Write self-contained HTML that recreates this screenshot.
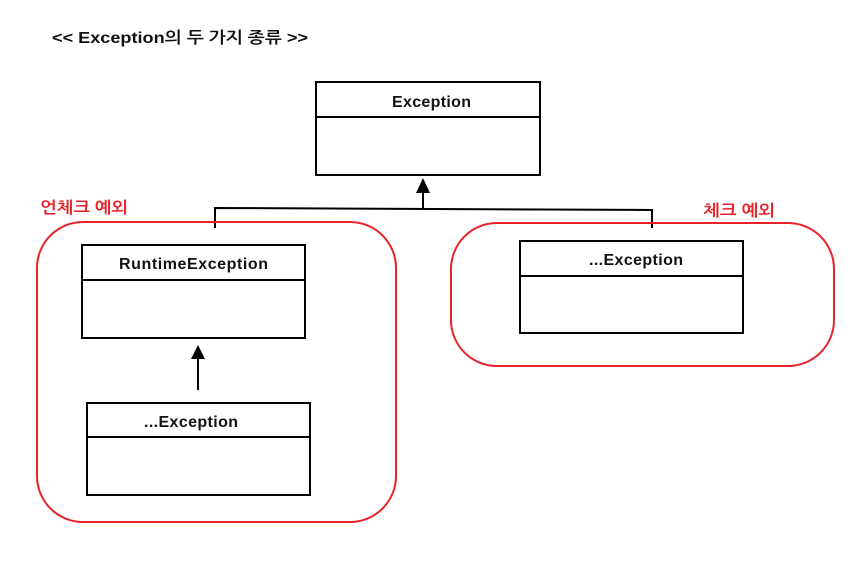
<!DOCTYPE html>
<html><head><meta charset="utf-8"><style>
body{margin:0;background:#fff;width:858px;height:558px;overflow:hidden}
text{font-family:"Liberation Sans","NanumGothic","Noto Sans CJK KR",sans-serif}
</style></head><body>
<svg width="858" height="558" xmlns="http://www.w3.org/2000/svg">
<text x="52" y="43" font-size="16" font-weight="bold" fill="#111" textLength="256" lengthAdjust="spacingAndGlyphs">&lt;&lt; Exception의 두 가지 종류 &gt;&gt;</text>
<g fill="none" stroke="#000" stroke-width="2">
<rect x="316" y="82" width="224" height="93"/><line x1="316" y1="117" x2="540" y2="117"/>
<line x1="423" y1="192" x2="423" y2="208"/>
<polyline points="215,228 215,208 652,210 652,228"/>
<rect x="82" y="245" width="223" height="93"/><line x1="82" y1="280" x2="305" y2="280"/>
<line x1="198" y1="358" x2="198" y2="390"/>
<rect x="87" y="403" width="223" height="92"/><line x1="87" y1="437" x2="310" y2="437"/>
<rect x="520" y="241" width="223" height="92"/><line x1="520" y1="276" x2="743" y2="276"/>
</g>
<polygon points="423,178 416,193 430,193" fill="#000"/>
<polygon points="198,345 191,359 205,359" fill="#000"/>
<g fill="none" stroke="#e8222a" stroke-width="2">
<rect x="37" y="222" width="359" height="300" rx="46"/>
<rect x="451" y="223" width="383" height="143" rx="46"/>
</g>
<g font-size="16" font-weight="bold" fill="#111" lengthAdjust="spacingAndGlyphs">
<text x="392" y="107" textLength="79">Exception</text>
<text x="119" y="269" textLength="149">RuntimeException</text>
<text x="144" y="427" textLength="94">...Exception</text>
<text x="589" y="265" textLength="94">...Exception</text>
</g>
<g font-size="16" fill="#e8222a" font-weight="bold">
<text x="40" y="213" textLength="88" lengthAdjust="spacingAndGlyphs">언체크 예외</text>
<text x="703" y="216" textLength="72" lengthAdjust="spacingAndGlyphs">체크 예외</text>
</g>
</svg>
</body></html>
